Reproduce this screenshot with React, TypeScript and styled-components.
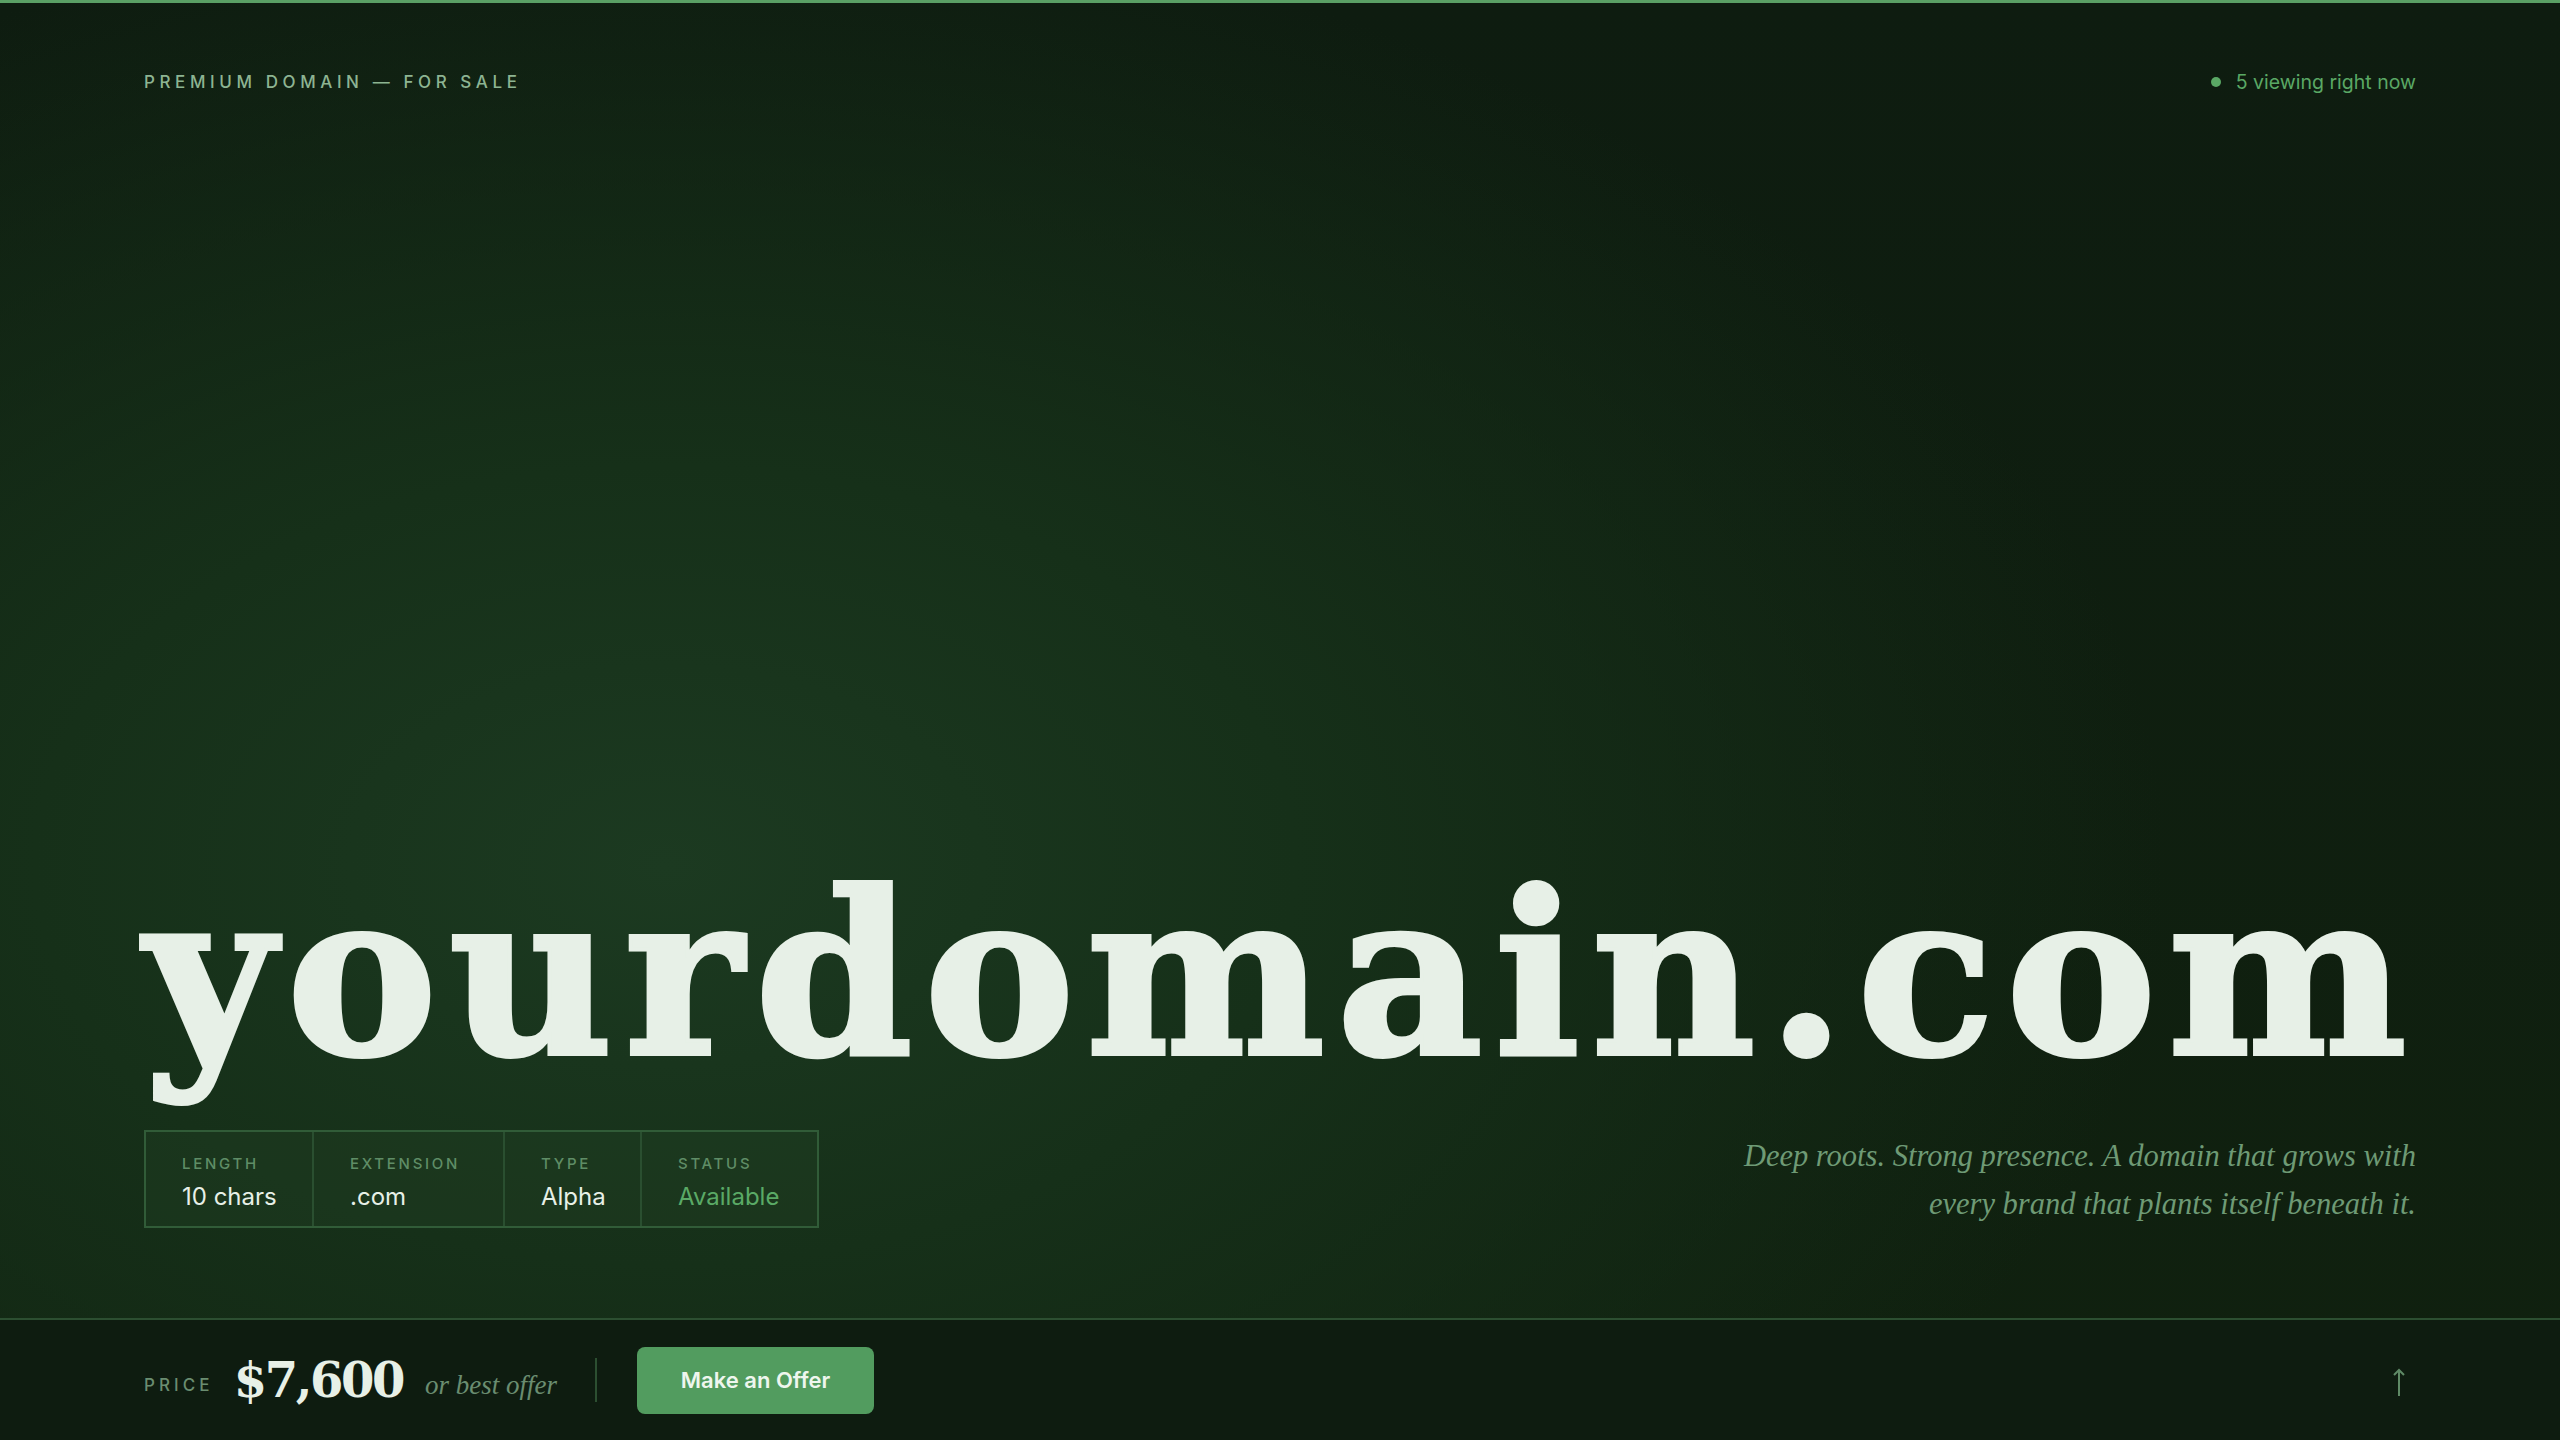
import styled, { createGlobalStyle } from "styled-components";

const GlobalStyle = createGlobalStyle`
  html, body {
    margin: 0;
    padding: 0;
    background: #0e1c10;
  }
  * {
    box-sizing: border-box;
  }
`;

type Spec = {
  label: string;
  value: string;
  width: number;
  highlight?: boolean;
};

const specs: Spec[] = [
  { label: "Length", value: "10 chars", width: 166 },
  { label: "Extension", value: ".com", width: 191 },
  { label: "Type", value: "Alpha", width: 137 },
  { label: "Status", value: "Available", width: 177, highlight: true },
];

const Page = styled.div`
  position: relative;
  width: 100%;
  height: 100vh;
  display: flex;
  flex-direction: column;
  overflow: hidden;
  font-family: Inter, "Noto Sans", sans-serif;
  background:
    radial-gradient(ellipse 1500px 950px at 26% 60%, #1c3a21 0%, #163019 42%, rgba(14, 28, 16, 0) 100%),
    linear-gradient(180deg, #0e1c10 0%, #10210f 100%);
  border-top: 3px solid #5aa065;
`;

const Header = styled.header`
  display: flex;
  justify-content: space-between;
  align-items: center;
  padding: 67px 144px 0;
`;

const Eyebrow = styled.span`
  font-size: 17px;
  font-weight: 500;
  letter-spacing: 0.27em;
  text-transform: uppercase;
  color: #8db492;
`;

const Viewers = styled.span`
  display: flex;
  align-items: center;
  gap: 15px;
  font-size: 19.5px;
  color: #5aa865;
`;

const Dot = styled.i`
  width: 10px;
  height: 10px;
  border-radius: 50%;
  background: #5aa865;
`;

const Hero = styled.main`
  flex: 1;
  display: flex;
  flex-direction: column;
  justify-content: flex-end;
  padding: 0 144px 90px;
`;

const Headline = styled.h1`
  margin: 0 0 42px;
  font-family: "DejaVu Serif", "Liberation Serif", serif;
  font-weight: 700;
  font-size: 226px;
  line-height: 1;
  letter-spacing: 0.05em;
  color: #e7f0e7;
  -webkit-text-stroke: 4px #e7f0e7;
  white-space: nowrap;
`;

const MetaRow = styled.div`
  display: flex;
  justify-content: space-between;
  align-items: flex-end;
`;

const SpecTable = styled.div`
  display: flex;
  border: 2px solid #315c38;
`;

const SpecCell = styled.div<{ $width: number }>`
  width: ${({ $width }) => $width}px;
  height: 94px;
  padding: 22px 0 0 36px;
  display: flex;
  flex-direction: column;
  gap: 9px;
  background: rgba(34, 66, 38, 0.35);

  & + & {
    border-left: 2px solid #2a4f30;
  }
`;

const SpecLabel = styled.span`
  font-size: 15px;
  font-weight: 500;
  letter-spacing: 0.18em;
  text-transform: uppercase;
  color: #5f8d66;
`;

const SpecValue = styled.span<{ $highlight?: boolean }>`
  font-size: 24px;
  color: ${({ $highlight }) => ($highlight ? "#5aaa66" : "#e7f0e7")};
`;

const Tagline = styled.p`
  margin: 0;
  font-family: "Liberation Serif", serif;
  font-style: italic;
  font-size: 30.5px;
  line-height: 48px;
  text-align: right;
  color: #6e9a75;
`;

const Footer = styled.footer`
  height: 122px;
  flex-shrink: 0;
  display: flex;
  align-items: center;
  padding: 0 144px;
  border-top: 2px solid #2c4f31;
  background: #0e1c10;
`;

const PriceLabel = styled.span`
  font-size: 17px;
  font-weight: 500;
  letter-spacing: 0.24em;
  text-transform: uppercase;
  color: #6a8d70;
  margin-right: 20px;
  padding-top: 10px;
`;

const PriceValue = styled.span`
  font-family: "DejaVu Serif", "Liberation Serif", serif;
  font-weight: 700;
  font-size: 48px;
  letter-spacing: -0.05em;
  color: #e7f0e7;
  margin-right: 22px;
`;

const PriceNote = styled.span`
  font-family: "Liberation Serif", serif;
  font-style: italic;
  font-size: 27px;
  color: #6a8d70;
  padding-top: 10px;
`;

const Divider = styled.span`
  width: 2px;
  height: 44px;
  background: #2c4f31;
  margin: 0 40px 0 38px;
`;

const OfferButton = styled.button`
  width: 237px;
  height: 67px;
  border: 0;
  border-radius: 8px;
  background: #529c5f;
  color: #eef6ee;
  font-family: Inter, "Noto Sans", sans-serif;
  font-size: 22px;
  font-weight: 600;
  cursor: pointer;
`;

const ScrollTop = styled.svg`
  margin-left: auto;
  margin-right: 10px;
  margin-top: 6px;
  width: 14px;
  height: 30px;
  stroke: #5f8a66;
  fill: none;
`;

export default function App() {
  return (
    <>
      <GlobalStyle />
      <Page>
        <Header>
          <Eyebrow>Premium Domain — For Sale</Eyebrow>
          <Viewers>
            <Dot />5 viewing right now
          </Viewers>
        </Header>
        <Hero>
          <Headline>yourdomain.com</Headline>
          <MetaRow>
            <SpecTable>
              {specs.map((s) => (
                <SpecCell key={s.label} $width={s.width}>
                  <SpecLabel>{s.label}</SpecLabel>
                  <SpecValue $highlight={s.highlight}>{s.value}</SpecValue>
                </SpecCell>
              ))}
            </SpecTable>
            <Tagline>
              Deep roots. Strong presence. A domain that grows with
              <br />
              every brand that plants itself beneath it.
            </Tagline>
          </MetaRow>
        </Hero>
        <Footer>
          <PriceLabel>Price</PriceLabel>
          <PriceValue>$7,600</PriceValue>
          <PriceNote>or best offer</PriceNote>
          <Divider />
          <OfferButton>Make an Offer</OfferButton>
          <ScrollTop viewBox="0 0 14 30" strokeWidth={2}>
            <path d="M7 28V2" />
            <path d="M2 7L7 2l5 5" />
          </ScrollTop>
        </Footer>
      </Page>
    </>
  );
}
